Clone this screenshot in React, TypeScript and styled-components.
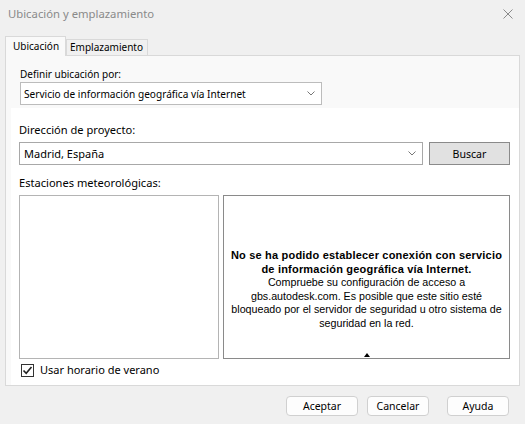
import styled, { createGlobalStyle } from 'styled-components'

const GlobalStyle = createGlobalStyle`
  html, body {
    margin: 0;
    padding: 0;
    background: #f0f0f0;
  }
  body {
    font-family: "Noto Sans", "Open Sans", sans-serif;
    color: #000;
  }
`

const Window = styled.div`
  width: 525px;
  height: 424px;
  display: flex;
  flex-direction: column;
  background: #f0f0f0;
  overflow: hidden;
`

const TitleBar = styled.div`
  height: 27px;
  display: flex;
  align-items: center;
  justify-content: space-between;
  padding: 0 12px 0 8px;
`

const Title = styled.span`
  font-size: 11.3px;
  color: #8a8a8a;
`

const TabStrip = styled.div`
  height: 28px;
  display: flex;
  align-items: flex-end;
  padding-left: 5px;
`

const Tab = styled.div<{ $active?: boolean }>`
  position: relative;
  z-index: ${(p) => (p.$active ? 2 : 1)};
  height: ${(p) => (p.$active ? '20px' : '17px')};
  box-sizing: border-box;
  padding: ${(p) => (p.$active ? '0 6px 0 7px' : '0 4px 0 3px')};
  margin-bottom: -1px;
  border: 1px solid #d9d9d9;
  border-bottom: ${(p) => (p.$active ? 'none' : '1px solid #d9d9d9')};
  background: ${(p) => (p.$active ? '#f9f9f9' : '#f0f0f0')};
  font-size: 10px;
  line-height: ${(p) => (p.$active ? '18px' : '15px')};
`

const Panel = styled.div`
  margin: 0 5px;
  height: 331px;
  box-sizing: border-box;
  border: 1px solid #d9d9d9;
  background: #f9f9f9;
  display: flex;
  flex-direction: column;
`

const TopSection = styled.div`
  padding: 11px 0 3px 14px;
  display: flex;
  flex-direction: column;
`

const SmallLabel = styled.div`
  font-size: 10px;
  line-height: 15px;
`

const Select = styled.div`
  width: 302px;
  height: 23px;
  box-sizing: border-box;
  border: 1px solid #bcbcbc;
  background: #fff;
  display: flex;
  align-items: center;
  justify-content: space-between;
  padding: 0 6px 0 3px;
  font-size: 10.1px;
`

const MainSection = styled.div`
  flex: 1;
  background: #fff;
  margin-left: 5px;
  padding: 14px 9px 0 8px;
  display: flex;
  flex-direction: column;
`

const Label = styled.div<{ $top?: number }>`
  font-size: 11.1px;
  line-height: 16px;
  margin-top: ${(p) => p.$top ?? 0}px;
`

const Row = styled.div`
  display: flex;
  gap: 6px;
  margin-top: 4px;
`

const Combo = styled.div`
  flex: 1;
  height: 23px;
  box-sizing: border-box;
  border: 1px solid #a8a8a8;
  display: flex;
  align-items: center;
  justify-content: space-between;
  padding: 0 6px 0 4px;
  font-size: 11px;
`

const SearchButton = styled.div`
  width: 81px;
  height: 23px;
  box-sizing: border-box;
  border: 1px solid #8a8a8a;
  background: #e1e1e1;
  display: flex;
  align-items: center;
  justify-content: center;
  font-size: 10.6px;
`

const Boxes = styled.div`
  display: flex;
  gap: 4px;
  margin-top: 4px;
  height: 164px;
`

const ListBox = styled.div`
  width: 200px;
  box-sizing: border-box;
  border: 1px solid #b4b4b4;
  background: #fff;
`

const InfoBox = styled.div`
  flex: 1;
  box-sizing: border-box;
  border: 1px solid #8a8a8a;
  background: #fff;
  display: flex;
  flex-direction: column;
  align-items: center;
  padding-top: 53px;
  font-family: "Liberation Sans", Arial, sans-serif;
  text-align: center;
  color: #000;
`

const InfoLine = styled.div<{ $bold?: boolean }>`
  font-size: ${(p) => (p.$bold ? '11px' : '10.7px')};
  font-weight: ${(p) => (p.$bold ? 700 : 400)};
  letter-spacing: ${(p) => (p.$bold ? '0.2px' : '0')};
  line-height: 13.6px;
  white-space: nowrap;
`

const Marker = styled.div`
  margin-top: auto;
  margin-bottom: 1px;
  width: 0;
  height: 0;
  border-left: 3px solid transparent;
  border-right: 3px solid transparent;
  border-bottom: 4px solid #000;
`

const CheckRow = styled.div`
  display: flex;
  align-items: center;
  gap: 6px;
  margin-top: 3px;
  padding-left: 2px;
  font-size: 11px;
  line-height: 16px;
`

const CheckBox = styled.div`
  width: 13px;
  height: 13px;
  box-sizing: border-box;
  border: 1px solid #333;
  background: #fff;
  display: flex;
  align-items: center;
  justify-content: center;
`

const Footer = styled.div`
  display: flex;
  justify-content: flex-end;
  padding: 10px 16px 0 0;
`

const DialogButton = styled.div<{ $width: number; $gap?: number }>`
  width: ${(p) => p.$width}px;
  height: 20px;
  margin-left: ${(p) => p.$gap ?? 0}px;
  box-sizing: border-box;
  border: 1px solid #d0d0d0;
  border-radius: 4px;
  background: #fdfdfd;
  display: flex;
  align-items: center;
  justify-content: center;
  font-size: 10.5px;
`

const Chevron = () => (
  <svg width="8" height="5" viewBox="0 0 8 5">
    <path d="M0.5 0.5 L4 4 L7.5 0.5" fill="none" stroke="#777" strokeWidth="1" />
  </svg>
)

function App() {
  return (
    <Window>
      <GlobalStyle />
      <TitleBar>
        <Title>Ubicación y emplazamiento</Title>
        <svg width="10" height="10" viewBox="0 0 10 10">
          <path d="M0.5 0.5 L9.5 9.5 M9.5 0.5 L0.5 9.5" stroke="#8a8a8a" strokeWidth="1" />
        </svg>
      </TitleBar>
      <TabStrip>
        <Tab $active>Ubicación</Tab>
        <Tab>Emplazamiento</Tab>
      </TabStrip>
      <Panel>
        <TopSection>
          <SmallLabel>Definir ubicación por:</SmallLabel>
          <Select>
            <span>Servicio de información geográfica vía Internet</span>
            <Chevron />
          </Select>
        </TopSection>
        <MainSection>
          <Label>Dirección de proyecto:</Label>
          <Row>
            <Combo>
              <span>Madrid, España</span>
              <Chevron />
            </Combo>
            <SearchButton>Buscar</SearchButton>
          </Row>
          <Label $top={10}>Estaciones meteorológicas:</Label>
          <Boxes>
            <ListBox />
            <InfoBox>
              <InfoLine $bold>No se ha podido establecer conexión con servicio</InfoLine>
              <InfoLine $bold>de información geográfica vía Internet.</InfoLine>
              <InfoLine>Compruebe su configuración de acceso a</InfoLine>
              <InfoLine>gbs.autodesk.com. Es posible que este sitio esté</InfoLine>
              <InfoLine>bloqueado por el servidor de seguridad u otro sistema de</InfoLine>
              <InfoLine>seguridad en la red.</InfoLine>
              <Marker />
            </InfoBox>
          </Boxes>
          <CheckRow>
            <CheckBox>
              <svg width="11" height="11" viewBox="0 0 11 11">
                <path d="M1.5 5.5 L4.2 8.3 L9.5 2" fill="none" stroke="#222" strokeWidth="1.6" />
              </svg>
            </CheckBox>
            <span>Usar horario de verano</span>
          </CheckRow>
        </MainSection>
      </Panel>
      <Footer>
        <DialogButton $width={72}>Aceptar</DialogButton>
        <DialogButton $width={62} $gap={9}>Cancelar</DialogButton>
        <DialogButton $width={62} $gap={18}>Ayuda</DialogButton>
      </Footer>
    </Window>
  )
}

export default App
